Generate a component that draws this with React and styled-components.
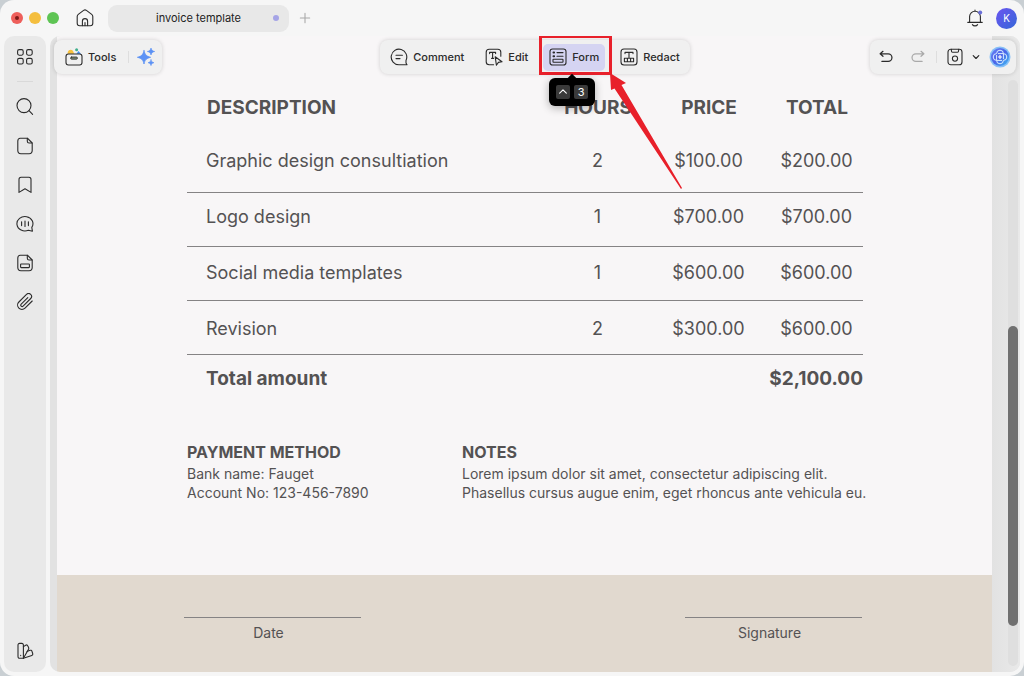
import React from 'react'
import styled, { createGlobalStyle } from 'styled-components'

const rows = [
  { name: 'Graphic design consultiation', hours: 2, price: '$100.00', total: '$200.00', below: 19 },
  { name: 'Logo design', hours: 1, price: '$700.00', total: '$700.00', below: 17 },
  { name: 'Social media templates', hours: 1, price: '$600.00', total: '$600.00', below: 15 },
  { name: 'Revision', hours: 2, price: '$300.00', total: '$600.00', below: 13 },
]

const Icon = ({ size = 18, children, ...rest }) => (
  <svg
    width={size}
    height={size}
    viewBox="0 0 18 18"
    fill="none"
    stroke="currentColor"
    strokeWidth="1.1"
    strokeLinecap="round"
    strokeLinejoin="round"
    aria-hidden="true"
    {...rest}
  >
    {children}
  </svg>
)

const HomeIcon = () => (
  <Icon>
    <path d="M1.2 7.6c0-.9.4-1.6 1.1-2.2L7.6 1.4c.8-.6 2-.6 2.8 0l5.3 4c.7.6 1.1 1.3 1.1 2.2v6.6c0 1.5-1 2.5-2.5 2.5H3.7c-1.5 0-2.5-1-2.5-2.5z" />
    <path d="M6.4 16.6v-4.4a2.6 2.6 0 0 1 5.2 0v4.4M9 13.6v3" />
  </Icon>
)

const GridIcon = () => (
  <Icon>
    <rect x="1.6" y="1.6" width="5.6" height="5.6" rx="1.6" />
    <rect x="10.6" y="1.6" width="5.6" height="5.6" rx="1.6" />
    <rect x="1.6" y="10.4" width="5.6" height="5.6" rx="1.6" />
    <rect x="10.6" y="10.4" width="5.6" height="5.6" rx="1.6" />
  </Icon>
)

const SearchIcon = () => (
  <Icon>
    <circle cx="8" cy="7.6" r="7" />
    <path d="M13 12.7l3.6 3.6" />
  </Icon>
)

const PageIcon = () => (
  <Icon>
    <path d="M4.2 1.2h7.2L16.200 6v7.600c0 1.900-1.200 3.100-3.100 3.100H4.900c-1.900 0-3.100-1.200-3.100-3.100V4c0-1.600.9-2.800 2.400-2.800z" />
    <path d="M11.3 1.4v2.800c0 1.100.7 1.800 1.800 1.800H16" />
  </Icon>
)

const BookmarkIcon = () => (
  <Icon>
    <path d="M3 16.400V3.400c0-1.300.8-2.100 2.100-2.100h7.800c1.300 0 2.100.8 2.100 2.100v13L9 12.800z" />
  </Icon>
)

const VoiceIcon = () => (
  <Icon>
    <path d="M12.400 15.200A8 7.200 0 1 1 15.800 12.400L16.400 16.200z" />
    <path d="M5.600 6.800v3.800M9 6v5.400M12.400 6.800v3.800" />
  </Icon>
)

const FieldsIcon = () => (
  <Icon>
    <path d="M4.200 1.200h7.200L16.200 6v7.600c0 1.900-1.200 3.100-3.100 3.100H4.900c-1.900 0-3.100-1.200-3.100-3.100V4c0-1.600.9-2.800 2.400-2.800z" />
    <path d="M11.300 1.400v2.800c0 1.100.7 1.800 1.800 1.800H16" />
    <rect x="4.600" y="10" width="8.800" height="3.600" rx=".6" />
  </Icon>
)

const ClipIcon = () => (
  <Icon>
    <path d="M11.800 4.600L5.200 11.200a1.300 1.300 0 0 0 1.900 1.900l7.600-7.600a2.900 2.900 0 0 0-4.200-4.100L2.900 9a4.300 4.300 0 0 0 6.100 6.200l7.200-7.200" />
  </Icon>
)

const SwatchIcon = () => (
  <Icon>
    <path d="M2 3c0-1 .6-1.600 1.600-1.600h2.200c1 0 1.600.6 1.600 1.600v13.200H3.600c-1 0-1.600-.6-1.600-1.600z" />
    <path d="M7.400 4.600l2.300-1.400c.8-.5 1.600-.3 2 .5l.9 1.700c.4.8.3 1.300-.2 2l-5 8.800" />
    <path d="M11 9.400l3-1.100c.9-.3 1.600 0 1.900.9l.8 2.300c.3.900 0 1.600-.9 1.900l-8.400 2.800M4.700 13.400v.2" />
  </Icon>
)

const ToolboxIcon = () => (
  <Icon>
    <path d="M2.600 5.800c0-2.400 1.300-4 3-4s2.200.8 2.800 2l.8 2z" fill="#f7c13c" stroke="none" />
    <circle cx="11.600" cy="1.800" r="1.500" fill="#3fae8c" stroke="none" />
    <path d="M11.600 5.800l1.800-2.700 2.600 2.700z" fill="#3c8df5" stroke="none" />
    <rect x="1" y="6" width="16" height="11" rx="2.400" />
    <rect x="5.600" y="9" width="6.800" height="2.200" rx="1" fill="#7d8b75" strokeWidth=".8" />
  </Icon>
)

const SparkIcon = () => (
  <Icon fill="#5c92f5" stroke="none">
    <path d="M7 2.600c.8 4 2.400 5.700 6.600 6.700-4.200 1-5.800 2.700-6.600 6.700-.8-4-2.400-5.700-6.600-6.700C4.600 8.300 6.200 6.600 7 2.600z" stroke="#5c92f5" strokeWidth=".8" />
    <path d="M14 0c.5 2.100 1.400 3 3.700 3.500C15.400 4 14.500 4.900 14 7c-.5-2.100-1.400-3-3.700-3.500C12.600 3 13.500 2.100 14 0z" stroke="#5c92f5" strokeWidth=".6" />
    <path d="M14 11.800c.4 1.800 1.100 2.500 3 2.900-1.900.4-2.600 1.100-3 2.900-.4-1.800-1.100-2.500-3-2.900 1.900-.4 2.600-1.100 3-2.900z" stroke="#5c92f5" strokeWidth=".6" />
  </Icon>
)

const CommentIcon = () => (
  <Icon>
    <path d="M9 16.800A7.800 7.800 0 1 1 16 12.400V15L17 16.800z" />
    <path d="M6 7.200h6.400M6 10.600h4" />
  </Icon>
)

const EditIcon = () => (
  <Icon>
    <path d="M8.600 16.700H4.200c-1.900 0-3-1.100-3-3V4.300c0-1.900 1.100-3 3-3h8.600c1.900 0 3 1.100 3 3v4" />
    <path d="M4.600 5.600V4.400h6v1.200M7.600 4.600v5.600M6.600 10.400h2" />
    <path d="M10.200 8.800l6.800 5-3.600.6-2 2.800z" fill="#f0f0f0" />
  </Icon>
)

const FormIcon = () => (
  <Icon>
    <rect x="1" y="1" width="16" height="16" rx="2.600" />
    <path d="M8 4.600h6M8 8.200h6" />
    <path d="M4.500 4.600h.6M4.500 8.200h.6" strokeWidth="2" />
    <rect x="4" y="11.200" width="10" height="3" rx=".5" />
  </Icon>
)

const RedactIcon = () => (
  <Icon>
    <rect x="1" y="1" width="16" height="16" rx="3" />
    <path d="M5 5.600V4.400h8v1.200M9 4.600v5" />
    <path d="M4.400 10.200h9.200v3.600H4.400zM7.400 10.200v3.600M10.600 10.200v3.600" />
  </Icon>
)

const UndoIcon = () => (
  <Icon size={16}>
    <path d="M5.600 2.600L2.400 5.400l3.200 2.800M2.600 5.400h8.800a4.300 4.300 0 0 1 0 8.600H4.400" strokeWidth="1.400" />
  </Icon>
)

const RedoIcon = () => (
  <Icon size={16}>
    <path d="M12.400 2.600l3.200 2.800-3.200 2.800M15.400 5.400H6.600a4.300 4.300 0 0 0 0 8.600h7" strokeWidth="1.400" />
  </Icon>
)

const SaveIcon = () => (
  <Icon>
    <rect x="2" y="1.200" width="14" height="15.600" rx="2.800" />
    <path d="M5.400 1.400v1.700c0 .8.400 1.200 1.200 1.200h4.800c.8 0 1.200-.4 1.200-1.200V1.400" />
    <circle cx="9" cy="10.600" r="2.600" />
  </Icon>
)

const ChevronIcon = () => (
  <Icon size={10}>
    <path d="M4 6.600l5 5 5-5" strokeWidth="2.200" />
  </Icon>
)

const AssistantIcon = () => (
  <svg width="22" height="22" viewBox="0 0 22 22" fill="none" aria-hidden="true">
    <defs>
      <linearGradient id="assistant" x1="0" y1="0" x2="1" y2="1">
        <stop offset="0" stopColor="#6a83f4" />
        <stop offset=".5" stopColor="#4a63e8" />
        <stop offset="1" stopColor="#3fc0f2" />
      </linearGradient>
    </defs>
    <circle cx="11" cy="11" r="10.500" fill="#86bff7" />
    <circle cx="11" cy="11" r="9" fill="url(#assistant)" />
    <path
      d="M7.600 7.600a3.400 3.400 0 0 1 6.800 0 3.400 3.400 0 0 1 0 6.800 3.400 3.400 0 0 1-6.800 0 3.400 3.400 0 0 1 0-6.800z"
      stroke="#d9ecff"
    />
    <path d="M7.600 9v5.400H13M14.400 13V7.600H9" stroke="#d9ecff" />
    <path d="M11 9v4M9 11h4" stroke="#fff" strokeWidth="1.200" />
  </svg>
)

const BellIcon = () => (
  <Icon>
    <path d="M3.600 13V7.600a5.400 5.400 0 0 1 10.800 0V13M1.800 13.400h14.400M9 2.200V1" />
    <path d="M6.400 15.600c.6.9 1.500 1.300 2.600 1.300s2-.4 2.600-1.300" />
    <circle cx="14.200" cy="3.400" r="2" fill="#6a6fd8" stroke="none" />
  </Icon>
)

const App = () => {
  return (
    <>
      <GlobalStyle />
      <Window>
        <TitleBar>
          <Lights>
            <Light $color="#ee5f5b"><i /></Light>
            <Light $color="#f4be3e" />
            <Light $color="#5ec454" />
          </Lights>
          <IconButton aria-label="Home"><HomeIcon /></IconButton>
          <Tab>
            <span>invoice template</span>
            <Unsaved />
          </Tab>
          <NewTab aria-label="New tab">
            <Icon size={12}><path d="M9 2v14M2 9h14" strokeWidth="1.600" /></Icon>
          </NewTab>
          <Account>
            <IconButton aria-label="Notifications"><BellIcon /></IconButton>
            <Avatar>K</Avatar>
          </Account>
        </TitleBar>

        <Body>
          <Sidebar>
            <SideButton aria-label="Thumbnails"><GridIcon /></SideButton>
            <SideLine />
            <SideButton aria-label="Search"><SearchIcon /></SideButton>
            <SideButton aria-label="Pages"><PageIcon /></SideButton>
            <SideButton aria-label="Bookmarks"><BookmarkIcon /></SideButton>
            <SideButton aria-label="Comments"><VoiceIcon /></SideButton>
            <SideButton aria-label="Fields"><FieldsIcon /></SideButton>
            <SideButton aria-label="Attachments"><ClipIcon /></SideButton>
            <SideBottom>
              <SideButton aria-label="Theme"><SwatchIcon /></SideButton>
            </SideBottom>
          </Sidebar>

          <Viewer>
            <Page>
              <Invoice>
                <Table>
                  <colgroup>
                    <col />
                    <Col $width={98} />
                    <Col $width={124} />
                    <Col $width={92} />
                  </colgroup>
                  <thead>
                    <tr>
                      <Head $left>DESCRIPTION</Head>
                      <Head>HOURS</Head>
                      <Head>PRICE</Head>
                      <Head>TOTAL</Head>
                    </tr>
                  </thead>
                  <tbody>
                    {rows.map((row) => (
                      <Row key={row.name} $below={row.below}>
                        <Cell $left>{row.name}</Cell>
                        <Cell>{row.hours}</Cell>
                        <Cell>{row.price}</Cell>
                        <Cell>{row.total}</Cell>
                      </Row>
                    ))}
                  </tbody>
                  <tfoot>
                    <tr>
                      <Sum $left>Total amount</Sum>
                      <Sum colSpan={3}>$2,100.00</Sum>
                    </tr>
                  </tfoot>
                </Table>
                <Details>
                  <div>
                    <DetailTitle>PAYMENT METHOD</DetailTitle>
                    <DetailText>Bank name: Fauget</DetailText>
                    <DetailText>Account No: 123-456-7890</DetailText>
                  </div>
                  <div>
                    <DetailTitle>NOTES</DetailTitle>
                    <DetailText>Lorem ipsum dolor sit amet, consectetur adipiscing elit.</DetailText>
                    <DetailText>Phasellus cursus augue enim, eget rhoncus ante vehicula eu.</DetailText>
                  </div>
                </Details>
              </Invoice>
              <SignArea>
                <SignField>Date</SignField>
                <SignField>Signature</SignField>
              </SignArea>
            </Page>
            <Gutter>
              <Track><Thumb /></Track>
            </Gutter>

            <Toolbars>
              <Toolbar $side="start">
                <ToolButton><ToolboxIcon />Tools</ToolButton>
                <BarLine />
                <IconButton aria-label="AI tools"><SparkIcon /></IconButton>
              </Toolbar>
              <Toolbar $gap={9} $pad={4}>
                <ToolButton><CommentIcon />Comment</ToolButton>
                <ToolButton><EditIcon />Edit</ToolButton>
                <FormSlot>
                  <ToolButton $active><FormIcon />Form</ToolButton>
                  <Marker />
                  <Tip role="tooltip">
                    <kbd><Icon size={10}><path d="M3 11l6-6 6 6" strokeWidth="2" /></Icon></kbd>
                    <kbd>3</kbd>
                  </Tip>
                  <Arrow width="78" height="118" viewBox="0 0 78 118" aria-hidden="true">
                    <path d="M3 2L19 12 14.500 14 75 117 74 118 7.500 17.500 4 19z" fill="#e8202a" />
                  </Arrow>
                </FormSlot>
                <ToolButton><RedactIcon />Redact</ToolButton>
              </Toolbar>
              <Toolbar $side="end" $gap={7}>
                <History>
                  <IconButton aria-label="Undo"><UndoIcon /></IconButton>
                  <IconButton aria-label="Redo" disabled><RedoIcon /></IconButton>
                </History>
                <BarLine />
                <SaveGroup>
                  <IconButton aria-label="Save"><SaveIcon /></IconButton>
                  <SmallButton aria-label="Save options"><ChevronIcon /></SmallButton>
                </SaveGroup>
                <IconButton aria-label="Assistant"><AssistantIcon /></IconButton>
              </Toolbar>
            </Toolbars>
          </Viewer>
        </Body>
      </Window>
    </>
  )
}

const GlobalStyle = createGlobalStyle`
  * {
    box-sizing: border-box;
  }
  body {
    margin: 0;
    background: #c9cfd3;
    font-family: Inter, "Liberation Sans", sans-serif;
    color: #2b2b2b;
  }
  button {
    font: inherit;
    color: inherit;
    border: 0;
    padding: 0;
    background: none;
  }
  svg {
    display: block;
    flex: none;
  }
`

const Window = styled.div`
  display: flex;
  flex-direction: column;
  min-height: 100vh;
  padding: 0 4px 4px;
  border-radius: 14px;
  background: #f6f6f6;
`

const TitleBar = styled.header`
  display: flex;
  align-items: center;
  height: 36px;
  padding: 0 3px 0 7px;
  font-size: 11px;
`

const Lights = styled.div`
  display: flex;
  gap: 6px;
  margin-right: 15px;
`

const Light = styled.span`
  display: grid;
  place-items: center;
  width: 12px;
  height: 12px;
  border-radius: 50%;
  background: ${(props) => props.$color};

  i {
    width: 4px;
    height: 4px;
    border-radius: 50%;
    background: #7c1a18;
  }
`

const IconButton = styled.button`
  display: grid;
  place-items: center;
  width: 22px;
  height: 26px;

  &:disabled {
    color: #a9a9a9;
  }
`

const SmallButton = styled(IconButton)`
  width: 12px;
`

const Tab = styled.div`
  display: grid;
  grid-template-columns: 1fr auto 1fr;
  align-items: center;
  width: 181px;
  height: 27px;
  margin-left: 12px;
  padding: 0 10px;
  border-radius: 9px;
  background: #e8e8e8;
  color: #222;

  span:first-child {
    grid-column: 2;
  }
`

const Unsaved = styled.span`
  justify-self: end;
  width: 6px;
  height: 6px;
  border-radius: 50%;
  background: #a5a4e6;
`

const NewTab = styled(IconButton)`
  margin-left: 5px;
  color: #a8a8a8;
`

const Account = styled.div`
  display: flex;
  align-items: center;
  gap: 10px;
  margin-left: auto;
`

const Avatar = styled.button`
  width: 21px;
  height: 21px;
  border-radius: 50%;
  background: linear-gradient(135deg, #6b55f0, #3567d8);
  color: #fff;
  font-size: 10px;
`

const Body = styled.div`
  flex: 1;
  display: flex;
  gap: 4px;
`

const Sidebar = styled.nav`
  display: flex;
  flex-direction: column;
  align-items: center;
  width: 42px;
  border-radius: 10px;
  background: #e9e9e9;
`

const SideButton = styled.button`
  display: grid;
  place-items: center;
  width: 42px;
  height: 39px;

  &:first-child {
    height: 42px;
  }
`

const SideLine = styled.div`
  width: 16px;
  height: 1px;
  margin: 3px 0 5px;
  background: #d9d9d9;
`

const SideBottom = styled.div`
  margin-top: auto;
`

const Viewer = styled.main`
  position: relative;
  flex: 1;
  display: flex;
  padding-left: 7px;
  border-radius: 10px;
  overflow: hidden;
  background: #e2e2e2;
`

const Page = styled.article`
  flex: 1;
  min-width: 0;
  display: flex;
  flex-direction: column;
  background: #f8f6f7;
  color: #545253;
`

const Gutter = styled.div`
  display: flex;
  justify-content: flex-end;
  width: 28px;
  padding: 44px 2px 6px 0;
  background: linear-gradient(90deg, #e2e2e2, #e9e9e9);
`

const Track = styled.div`
  display: grid;
  grid-template-rows: 246fr 300fr 40fr;
  width: 10px;
  border-radius: 5px;
  background: #dfdfdf;
`

const Thumb = styled.div`
  grid-row: 2;
  border-radius: 5px;
  background: #707070;
`

const Invoice = styled.section`
  padding: 58px 129px 73px 130px;
`

const Table = styled.table`
  width: 100%;
  table-layout: fixed;
  border-collapse: collapse;
  font-size: 18px;
  line-height: 24px;
`

const Col = styled.col`
  width: ${(props) => props.$width}px;
`

const Head = styled.th`
  height: 44px;
  padding: ${(props) => (props.$left ? '2px 0 0 20px' : '2px 0 0')};
  font-size: 19px;
  text-align: ${(props) => (props.$left ? 'left' : 'center')};
  vertical-align: top;
`

const Cell = styled.td`
  padding-left: ${(props) => (props.$left ? '19px' : '0')};
  text-align: ${(props) => (props.$left ? 'left' : 'center')};
  vertical-align: bottom;
`

const Row = styled.tr`
  height: 54px;
  border-bottom: 1px solid #858384;

  ${Cell} {
    padding-bottom: ${(props) => props.$below}px;
  }
`

const Sum = styled.th`
  padding: ${(props) => (props.$left ? '12px 0 0 19px' : '12px 0 0')};
  font-size: 19px;
  text-align: ${(props) => (props.$left ? 'left' : 'right')};
`

const Details = styled.div`
  display: grid;
  grid-template-columns: 275px minmax(0, 1fr);
  margin-top: 51px;
`

const DetailTitle = styled.h2`
  margin: 0 0 2px;
  font-size: 16px;
  line-height: 20px;
`

const DetailText = styled.p`
  margin: 0;
  font-size: 14px;
  line-height: 19px;
  white-space: nowrap;
`

const SignArea = styled.footer`
  flex: 1;
  display: flex;
  justify-content: space-between;
  padding: 42px 130px 0 127px;
  background: #e1d9cf;
`

const SignField = styled.div`
  width: 177px;
  height: 32px;
  padding: 5px 8px 0 0;
  border-top: 1px solid #858384;
  font-size: 14px;
  line-height: 20px;
  text-align: center;
`

const Toolbars = styled.div`
  position: absolute;
  inset: 0 0 auto;
  display: grid;
  grid-template-columns: 1fr auto 1fr;
  padding: 4px;
`

const Toolbar = styled.div`
  justify-self: ${(props) => props.$side || 'center'};
  display: flex;
  align-items: center;
  gap: ${(props) => props.$gap || 6}px;
  height: 34px;
  padding: 0 ${(props) => props.$pad || 5}px;
  border-radius: 8px;
  background: #f0f0f0;
  box-shadow: 0 0 4px rgba(0, 0, 0, 0.16);
`

const ToolButton = styled.button`
  display: flex;
  align-items: center;
  gap: 5px;
  height: 27px;
  padding: 0 6px;
  border-radius: 5px;
  background: ${(props) => (props.$active ? '#d5d4f2' : 'none')};
  font-size: 11px;
  font-weight: 500;
`

const BarLine = styled.span`
  width: 1px;
  height: 12px;
  background: #dedede;
`

const History = styled.div`
  display: flex;
  gap: 10px;
`

const SaveGroup = styled.div`
  display: flex;
  gap: 4px;
`

const FormSlot = styled.div`
  position: relative;
`

const Marker = styled.span`
  position: absolute;
  inset: -9px -7px -4px -4px;
  border: 3px solid #e8202a;
`

const Arrow = styled.svg`
  position: absolute;
  left: 64px;
  top: 27px;
`

const Tip = styled.div`
  position: absolute;
  left: 6px;
  top: 34px;
  display: flex;
  gap: 4px;
  padding: 7px;
  border-radius: 6px;
  background: #000;
  box-shadow: 0 2px 8px rgba(0, 0, 0, 0.3);

  &::before {
    content: '';
    position: absolute;
    top: -3px;
    left: 50%;
    width: 6px;
    height: 6px;
    margin-left: -3px;
    background: #000;
    transform: rotate(45deg);
  }

  kbd {
    display: grid;
    place-items: center;
    width: 14px;
    height: 14px;
    border-radius: 2px;
    background: #3a3a3a;
    color: #fff;
    font: 11px Inter, sans-serif;
  }
`

export default App
